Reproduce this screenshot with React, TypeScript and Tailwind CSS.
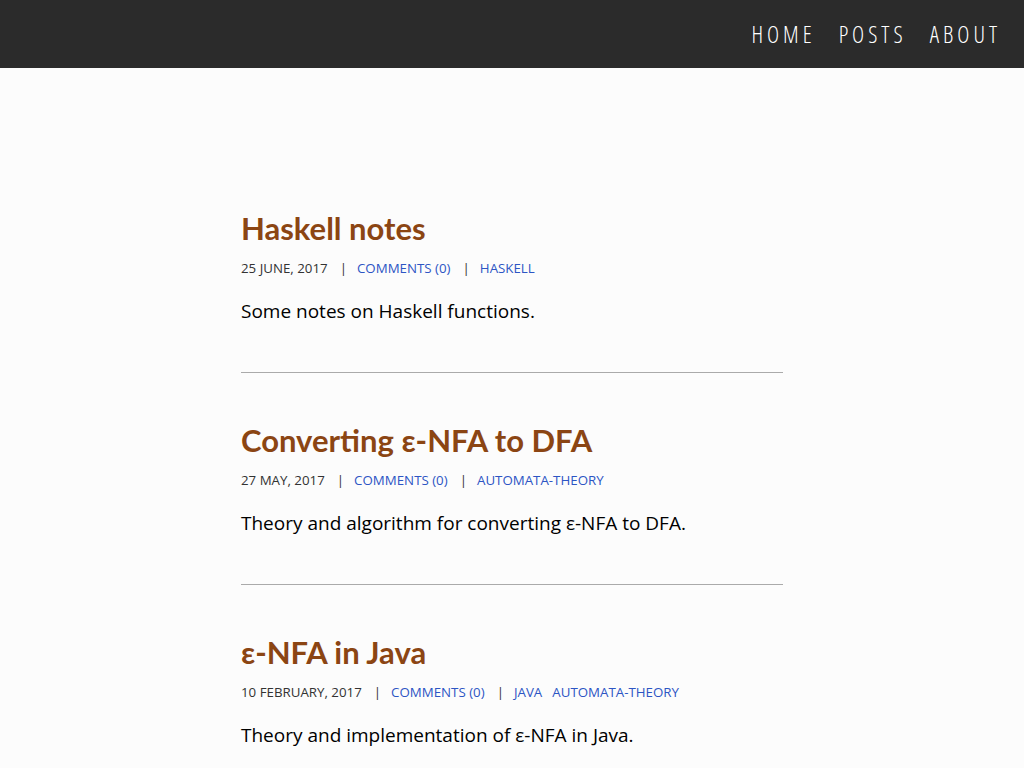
import React from 'react';

interface Post {
    title: string;
    date: string;
    tags: string[];
    summary: string;
}

const posts: Post[] = [
    {
        title: 'Haskell notes',
        date: '25 June, 2017',
        tags: ['haskell'],
        summary: 'Some notes on Haskell functions.',
    },
    {
        title: 'Converting ε-NFA to DFA',
        date: '27 May, 2017',
        tags: ['automata-theory'],
        summary: 'Theory and algorithm for converting ε-NFA to DFA.',
    },
    {
        title: 'ε-NFA in Java',
        date: '10 February, 2017',
        tags: ['java', 'automata-theory'],
        summary: 'Theory and implementation of ε-NFA in Java.',
    },
];

const Header: React.FC = () => {
    return (
        <header className="h-[68px] bg-[#2b2b2b] flex justify-end items-center pr-[23px]">
            <nav className="flex gap-[23px] text-white text-[23px] font-light tracking-[4px] font-stretch-condensed [font-family:'Open_Sans','Liberation_Sans',sans-serif]">
                <a href="#">HOME</a>
                <a href="#">POSTS</a>
                <a href="#">ABOUT</a>
            </nav>
        </header>
    );
};

const PostItem: React.FC<{ post: Post; last: boolean }> = ({ post, last }) => {
    return (
        <article>
            <h2 className="text-[31px] leading-[36px] font-bold text-[#8b4513] [font-family:Lato,'Liberation_Sans',sans-serif]">
                {post.title}
            </h2>
            <div className="mt-[12px] text-[13.3px] leading-[20px] uppercase text-[#333] flex items-center">
                <span>{post.date}</span>
                <span className="ml-[12px] mr-[10px]">|</span>
                <a href="#" className="text-[#2d55c4]">Comments (0)</a>
                <span className="ml-[12px] mr-[10px]">|</span>
                <span className="flex gap-[10px]">
                    {post.tags.map((tag) => (
                        <a key={tag} href="#" className="text-[#2d55c4]">
                            {tag}
                        </a>
                    ))}
                </span>
            </div>
            <p className="mt-[19px] text-[19px] leading-[28px] text-black">{post.summary}</p>
            {!last && <hr className="mt-[47px] mb-[49px] border-0 h-px bg-[#aaaaaa]" />}
        </article>
    );
};

const App: React.FC = () => {
    return (
        <div className="min-h-[768px] bg-[#fcfcfc] [font-family:'Open_Sans','Liberation_Sans',sans-serif]">
            <Header />
            <main className="w-[542px] ml-[241px] pt-[142px] pb-10">
                {posts.map((post, i) => (
                    <PostItem key={post.title} post={post} last={i === posts.length - 1} />
                ))}
            </main>
        </div>
    );
};

export default App;
